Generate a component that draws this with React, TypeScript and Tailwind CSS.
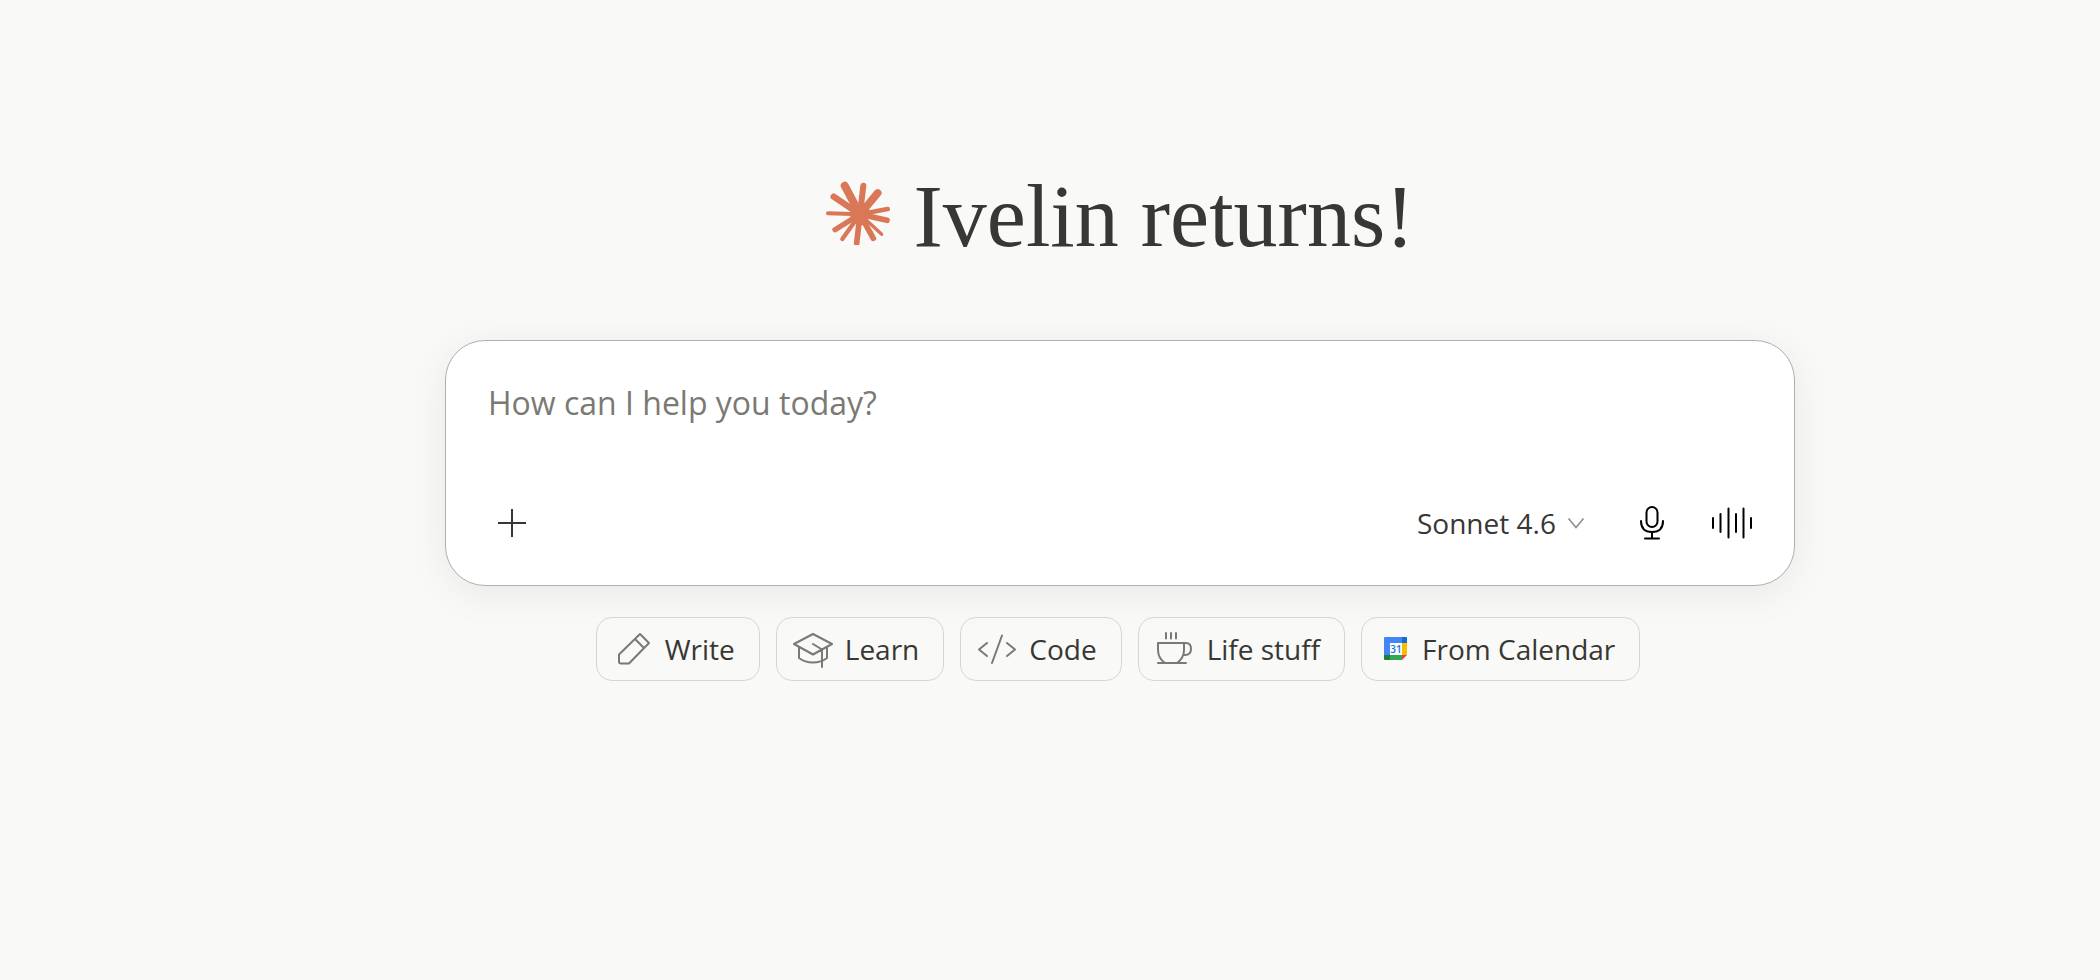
import type { ReactNode } from "react";

const rays = [
  { x: 104, y: 62, width: 24 },
  { x: 160, y: 62, width: 18 },
  { x: 203, y: 84, width: 23 },
  { x: 233, y: 132, width: 14 },
  { x: 231, y: 166, width: 17 },
  { x: 215, y: 208, width: 10 },
  { x: 190, y: 220, width: 17 },
  { x: 140, y: 235, width: 17 },
  { x: 97, y: 222, width: 13 },
  { x: 75, y: 194, width: 16 },
  { x: 54, y: 145, width: 12 },
  { x: 71, y: 95, width: 19 },
];

const Logo = () => (
  <svg
    viewBox="48 48 192 192"
    className="w-16 h-16 mb-2 shrink-0 text-[#d97757]"
    stroke="currentColor"
    strokeLinecap="round"
    aria-hidden="true"
  >
    {rays.map((ray) => (
      <line
        key={`${ray.x}-${ray.y}`}
        x1="150"
        y1="148"
        x2={ray.x}
        y2={ray.y}
        strokeWidth={ray.width}
      />
    ))}
    <path
      d="M126 116 148 122 174 116 180 144 174 158 170 178 146 182 130 170 120 152 122 134Z"
      fill="currentColor"
      stroke="none"
    />
  </svg>
);

const ChipIcon = ({ children }: { children: ReactNode }) => (
  <svg
    viewBox="0 0 40 40"
    className="w-10 h-10 text-[#7b7974]"
    fill="none"
    stroke="currentColor"
    strokeWidth="2"
    strokeLinecap="round"
    strokeLinejoin="round"
    aria-hidden="true"
  >
    {children}
  </svg>
);

const CalendarIcon = () => (
  <svg viewBox="0 0 32 40" className="w-8 h-10" aria-hidden="true">
    <path d="M7 8h17v6H12v12H6V9q0-1 1-1Z" fill="#4285f4" />
    <path d="M24 8h4q1 0 1 1v5h-5Z" fill="#1967d2" />
    <path d="M24 14h5v12h-5Z" fill="#fbbc04" />
    <path d="M12 26h12v5H12Z" fill="#34a853" />
    <path d="M6 26h6v5H7q-1 0-1-1Z" fill="#188038" />
    <path d="M24 26h5l-5 5Z" fill="#ea4335" />
    <path d="M12 14h12v12H12Z" fill="#fff" />
    <text
      x="18"
      y="24"
      textAnchor="middle"
      fontSize="10"
      fontWeight="600"
      fill="#1a73e8"
    >
      31
    </text>
  </svg>
);

const suggestions = [
  {
    label: "Write",
    icon: (
      <ChipIcon>
        <path d="M27 5 36 14 16 34.500H8Q6 34.500 6 32.500V25.500ZM22 10l9 9" />
      </ChipIcon>
    ),
  },
  {
    label: "Learn",
    icon: (
      <ChipIcon>
        <path d="M20 5 39 15 20 25.500 1 15ZM6 18.500V29q6 4.500 14 4.500T34 29V18.500M20 15l9 5.500V38" />
      </ChipIcon>
    ),
  },
  {
    label: "Code",
    icon: (
      <ChipIcon>
        <path d="M10 14 2 20.500 10 27M25 6.500 15 34M30 14l8 6.500L30 27" />
      </ChipIcon>
    ),
  },
  {
    label: "Life stuff",
    icon: (
      <ChipIcon>
        <path d="M11 4v5.500M16 4v5.500M21 4v5.500M3 14h26v7q0 8-7 13H10q-7-5-7-13ZM29 14h2q5 0 5 6t-6 6h-1M3 34h28" />
      </ChipIcon>
    ),
  },
  { label: "From Calendar", icon: <CalendarIcon /> },
];

const Composer = () => (
  <form
    className="w-full rounded-[40px] border border-[#afafad] bg-white px-10 py-[38px] shadow-[0_8px_40px_rgba(0,0,0,0.07)]"
    onSubmit={(e) => e.preventDefault()}
  >
    <textarea
      aria-label="Message"
      placeholder="How can I help you today?"
      className="block w-full h-[120px] pl-0.5 resize-none outline-none text-[32px] leading-[48px] text-[#373734] placeholder:text-[#7b7974]"
    />
    <div className="flex items-center justify-between h-12 text-[#373734]">
      <button
        type="button"
        aria-label="Add"
        className="flex items-center justify-center w-[52px] h-12"
      >
        <svg
          viewBox="0 0 28 28"
          className="w-7 h-7"
          stroke="currentColor"
          strokeWidth="2"
          aria-hidden="true"
        >
          <path d="M14 0v28M0 14h28" />
        </svg>
      </button>
      <div className="flex items-center">
        <label className="flex items-center gap-2 mr-11">
          <select
            aria-label="Model"
            className="appearance-none outline-none bg-transparent text-[28px] leading-10"
          >
            <option>Sonnet 4.6</option>
          </select>
          <svg
            viewBox="0 0 24 24"
            className="w-6 h-6 text-[#8b8a86]"
            fill="none"
            stroke="currentColor"
            strokeWidth="1.500"
            aria-hidden="true"
          >
            <path d="m4.500 7.500 7.500 9 7.500-9" />
          </svg>
        </label>
        <button
          type="button"
          aria-label="Dictate"
          className="flex items-center justify-center w-10 h-12 mr-[38px] text-black"
        >
          <svg
            viewBox="0 0 28 36"
            className="w-7 h-9"
            fill="none"
            stroke="currentColor"
            strokeWidth="2"
            strokeLinecap="round"
            aria-hidden="true"
          >
            <rect x="8.500" y="2" width="11" height="20" rx="5.500" />
            <path d="M3 16q0 11 11 11t11-11M14 27v6M7 33.500h14" />
          </svg>
        </button>
        <button
          type="button"
          aria-label="Voice mode"
          className="flex items-center justify-center h-12 text-black"
        >
          <svg
            viewBox="0 0 44 36"
            className="w-11 h-9"
            stroke="currentColor"
            strokeWidth="2"
            strokeLinecap="round"
            aria-hidden="true"
          >
            <path d="M3 13v10M10.500 9v18M18.500 3.500v29M26 9v18M33.500 3.500v29M41 13v10" />
          </svg>
        </button>
      </div>
    </div>
  </form>
);

const App = () => {
  return (
    <main className="min-h-screen bg-[#f9f9f7] pl-[140px] pt-[169px] font-['Open_Sans',sans-serif]">
      <div className="mx-auto flex max-w-[1350px] flex-col items-center">
        <div className="flex items-center gap-6 mb-[75px]">
          <Logo />
          <h1 className="font-['Liberation_Serif',serif] text-[88px] leading-[96px] text-[#373734]">
            Ivelin returns!
          </h1>
        </div>
        <Composer />
        <div className="mt-[31px] flex flex-wrap justify-center gap-4 pr-1">
          {suggestions.map((item) => (
            <button
              key={item.label}
              type="button"
              className="flex h-16 items-center gap-3 rounded-2xl border border-[#d6d6d3] pl-4 pr-6 text-[28px] leading-10 text-[#373734]"
            >
              {item.icon}
              {item.label}
            </button>
          ))}
        </div>
      </div>
    </main>
  );
};

export default App;
